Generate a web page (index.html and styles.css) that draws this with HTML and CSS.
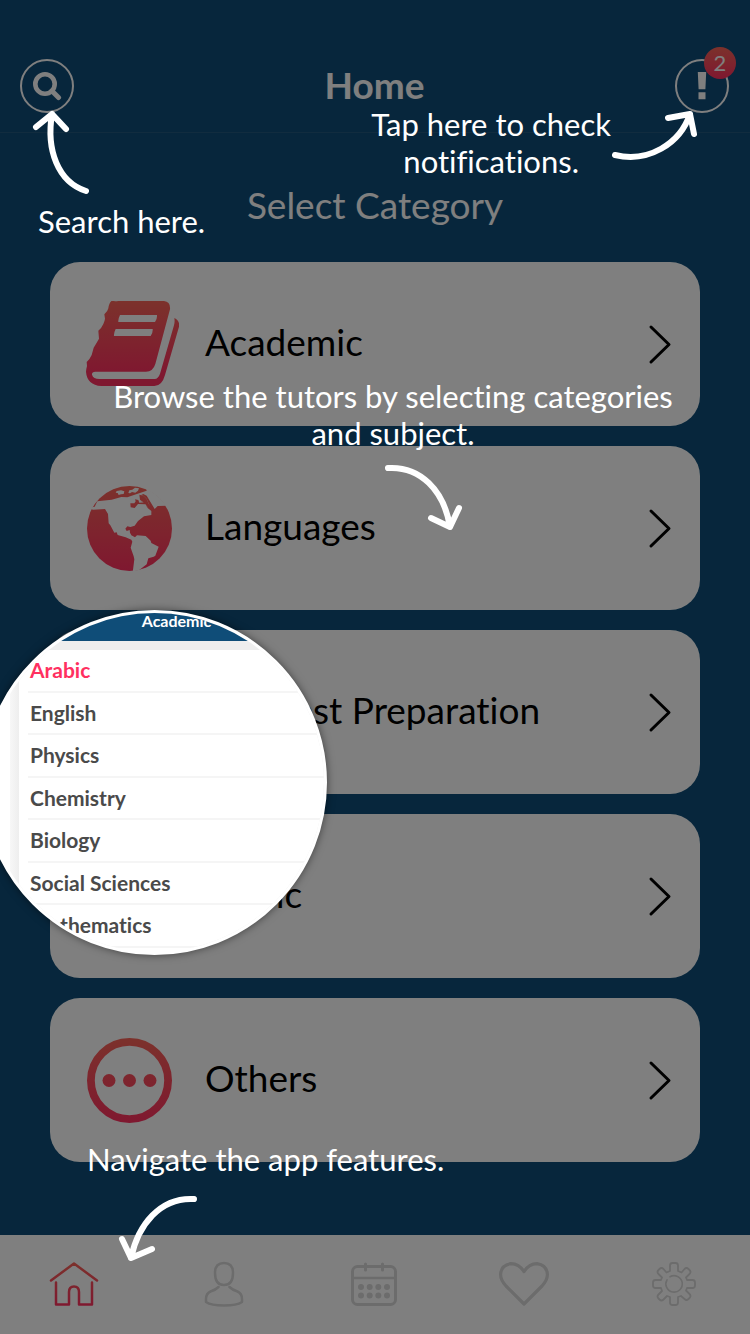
FILE: index.html
```html
<!DOCTYPE html>
<html lang="en">
<head>
<meta charset="utf-8">
<meta name="viewport" content="width=device-width, initial-scale=1">
<title>Home</title>
<link rel="stylesheet" href="styles.css">
</head>
<body>
<svg class="defs" width="0" height="0" aria-hidden="true">
  <defs>
    <linearGradient id="book-fill" gradientUnits="userSpaceOnUse" x1="0" y1="153" x2="0" y2="370"><stop offset="0" stop-color="#f86458"/><stop offset="1" stop-color="#ff3060"/></linearGradient>
    <linearGradient id="warm" x1="0" y1="0" x2="0" y2="1"><stop offset="0" stop-color="#f86458"/><stop offset="1" stop-color="#ff3060"/></linearGradient>
    <linearGradient id="globe-fill" gradientUnits="userSpaceOnUse" x1="0" y1="138" x2="0" y2="393"><stop offset="0" stop-color="#f86458"/><stop offset="1" stop-color="#ff3060"/></linearGradient>
    <linearGradient id="ring-fill" gradientUnits="userSpaceOnUse" x1="0" y1="0" x2="0" y2="85"><stop offset="0" stop-color="#f86458"/><stop offset="1" stop-color="#ff3060"/></linearGradient>
    <linearGradient id="home-fill" gradientUnits="userSpaceOnUse" x1="0" y1="0" x2="0" y2="46"><stop offset="0" stop-color="#f86458"/><stop offset="1" stop-color="#ff3060"/></linearGradient>
    <clipPath id="globe-clip"><circle cx="268" cy="265" r="129"/></clipPath>
  </defs>
</svg>

<div class="app">
  <header class="topbar">
    <button class="round" type="button" aria-label="Search">
      <svg width="30" height="30" viewBox="0 0 30 30"><circle cx="13" cy="13" r="9.7" fill="none" stroke="#fff" stroke-width="4.6"/><path d="M20 20l6.500 6.500" stroke="#fff" stroke-width="5" stroke-linecap="round"/></svg>
    </button>
    <h1 class="title">Home</h1>
    <button class="round" type="button" aria-label="Notifications">
      <svg width="10" height="28" viewBox="0 0 10 28"><path d="M.8 0h8.400l-.8 17.300h-6.800zM1.500 20.300h7v7h-7z" fill="#fff"/></svg>
      <span class="badge">2</span>
    </button>
  </header>

  <main class="main">
    <h2 class="heading">Select Category</h2>
    <nav class="cards" aria-label="Categories">
      <a class="card" href="#academic">
        <span class="pic pic-wide"><svg width="93" height="85" viewBox="138 153 279 255"><path fill="url(#book-fill)" fill-rule="evenodd" d="M222 153q6 2 12 0h138q20 2 18 25l-44 164q-7 23-28 23H166q-11 0-10 9 4 13 22 13h166q11-1 16-16l42-145q3-11 1-22 17 8 14 26l-42 145q-9 33-32 33H184q-43-3-46-43 1-10 3-17l-1-12q10-9 15-21l6-22q8-13 16-27l-2-24q10-8 15-20 4-9 5-16l-2-13q10-8 12-18 2-18 12-24zM240 195q-6 12-5 21h110q7-10 6-21zM227 237q-6 12-5 21h110q7-10 6-21z"/></svg></span>
        <span class="name">Academic</span>
        <svg class="chevron" width="22" height="38" viewBox="0 0 22 38"><path d="M2 2l18 17.500L2 37"/></svg>
      </a>
      <a class="card" href="#languages">
        <span class="pic"><svg width="85" height="85" viewBox="141 138 255 255"><circle cx="268.500" cy="265.500" r="127.500" fill="url(#warm)"/><g clip-path="url(#globe-clip)" fill="#fff"><path d="M157 202l7-2 8-16 43-5 29-8 18 1 22-8 36-12-1-8 24-10 60 60-25 3-25 1-9 9-24-40-10-5-11 5 4 15 14 12 6 10 11 9 0 12-22 4-18 14-10 14-13 4-9-2-6 7 4 7 9-3 1 8 4 8 11 6 6-6 26 2 15 14 2 7 22 11-10 27-5 3-16 5-5 18-23 18-2 10-15 6-2-9 5-40-2-9-9-26 5-18-3-6-17-7-24-7-3-8-7 1-12-22-5-6-2-28-9-15-36 2-6-2z"/></g><path d="M271 190l12 0 4-6-2-6 10 2 3 8 20-1-3 6-21-1-10 12-12-2zM298 164l12 3 10 10 8 18-4 8-10-10-14-14zM230 153l-3 5 6 1 3 6 7-2 8-1 2-8-10-3zM265 159l5 1 6-4 10 2 8-6 3-7-12-2-8 6-9 2z" fill="#fff"/><path d="M271 190l12 0 4-6-2-6 10 2 3 8 20-1-3 6-21-1-10 12-12-2zM298 164l12 3 10 10 12 28-8-2-10-13-14-11z" fill="url(#globe-fill)"/></svg></span>
        <span class="name">Languages</span>
        <svg class="chevron" width="22" height="38" viewBox="0 0 22 38"><path d="M2 2l18 17.500L2 37"/></svg>
      </a>
      <a class="card" href="#test-preparation">
        <span class="pic"></span>
        <span class="name">SAT Test Preparation</span>
        <svg class="chevron" width="22" height="38" viewBox="0 0 22 38"><path d="M2 2l18 17.500L2 37"/></svg>
      </a>
      <a class="card" href="#music">
        <span class="pic"></span>
        <span class="name">Music</span>
        <svg class="chevron" width="22" height="38" viewBox="0 0 22 38"><path d="M2 2l18 17.500L2 37"/></svg>
      </a>
      <a class="card" href="#others">
        <span class="pic"><svg width="85" height="85" viewBox="0 0 85 85" fill="url(#ring-fill)"><circle cx="42.500" cy="42.500" r="38.600" fill="none" stroke="url(#ring-fill)" stroke-width="7.800"/><circle cx="22" cy="42.500" r="6.500"/><circle cx="42.500" cy="42.500" r="6.500"/><circle cx="63" cy="42.500" r="6.500"/></svg></span>
        <span class="name">Others</span>
        <svg class="chevron" width="22" height="38" viewBox="0 0 22 38"><path d="M2 2l18 17.500L2 37"/></svg>
      </a>
    </nav>
  </main>

  <nav class="tabs" aria-label="App">
    <a class="tab" href="#home" aria-label="Home"><svg width="50" height="46" viewBox="0 0 50 46" stroke="url(#home-fill)"><path d="M2 19.500L25 2.500l23 17M7 21.500V43.500H20V31q0-5.500 5-5.500t5 5.500V43.500H43V21.500"/></svg></a>
    <a class="tab" href="#profile" aria-label="Profile"><svg width="40" height="46" viewBox="0 0 40 46"><path d="M20 2q9 0 9 10 0 12-9 12t-9-12Q11 2 20 2zM14.500 26q-3 3-8 4.500-4.500 2-4.500 7.500v3q5 3.500 18 3.500t18-3.500v-3q0-5.500-4.500-7.500-5-1.500-8-4.500"/></svg></a>
    <a class="tab" href="#calendar" aria-label="Calendar"><svg width="48" height="46" viewBox="0 0 48 46"><rect x="2.500" y="5.500" width="43" height="38" rx="5" stroke-width="3"/><path stroke-width="2.500" d="M3 17h42"/><path stroke-width="3" d="M15.500 3v6M32.500 3v6"/><g fill="#d8d8d8" stroke="none"><circle cx="11" cy="26" r="3"/><circle cx="19.700" cy="26" r="3"/><circle cx="28.300" cy="26" r="3"/><circle cx="37" cy="26" r="3"/><circle cx="11" cy="34.500" r="3"/><circle cx="19.700" cy="34.500" r="3"/><circle cx="28.300" cy="34.500" r="3"/><circle cx="37" cy="34.500" r="3"/></g></svg></a>
    <a class="tab" href="#favourites" aria-label="Favourites"><svg width="50" height="46" viewBox="0 0 50 46"><path stroke-width="3.200" d="M25 43L7 25Q1.600 19 1.600 13.500 2 4 12 2.600q8 0 13 8 5-8 13-8 10 1.400 10.400 10.900Q48.400 19 43 25z"/></svg></a>
    <a class="tab" href="#settings" aria-label="Settings"><svg width="44" height="46" viewBox="-22 -23 44 46"><path stroke-width="1.800" d="M-4-13V-18.500q0-2.500 2.500-2.500h3q2.500 0 2.500 2.500V-13L7.500-11.500 10.500-15q2-2 4 0l1 1q2 2 0 4L12-6.500 13-4H18.500q2.500 0 2.500 2.500v3q0 2.500-2.500 2.500H13L12 6.500 15.500 10q2 2 0 4l-1 1q-2 2-4 0L7 12 4 13V18.500q0 2.500-2.500 2.500h-3q-2.500 0-2.500-2.500V13L-7 12-10.500 15.500q-2 2-4 0l-1-1q-2-2 0-4L-12 7-13 4H-18.500q-2.500 0-2.500-2.500v-3q0-2.500 2.500-2.500H-13L-12-6.500-15.500-10q-2-2 0-4l1-1q2-2 4 0L-7.500-11.500z"/><path stroke-width="1.600" d="M-4-7.200A8.200 8.200 0 1 1-7-4.200"/></svg></a>
  </nav>

  <div class="coach">
    <p class="hint hint-search">Search here.</p>
    <svg class="arrow arrow-search" width="64" height="90" viewBox="30 108 64 90"><path d="M36 127L52 114 66 129M52 114C46 150 58 182 86 191"/></svg>

    <p class="hint hint-bell">Tap here to check<br>notifications.</p>
    <svg class="arrow arrow-bell" width="90" height="60" viewBox="608 108 90 60"><path d="M668 118L690 114 694 134M690 114C680 144 648 163 615 155"/></svg>

    <p class="hint hint-browse">Browse the tutors by selecting categories<br>and subject.</p>
    <svg class="arrow arrow-browse" width="80" height="70" viewBox="384 462 80 70"><path d="M431 518L450 527 459 508M450 527C444 490 420 466 388 468"/></svg>

    <div class="lens">
      <div class="lens-bar">Academic</div>
      <div class="lens-body">
        <ul class="subjects">
          <li class="subject on">Arabic</li>
          <li class="subject">English</li>
          <li class="subject">Physics</li>
          <li class="subject">Chemistry</li>
          <li class="subject">Biology</li>
          <li class="subject">Social Sciences</li>
          <li class="subject">Mathematics</li>
        </ul>
      </div>
    </div>

    <p class="hint hint-nav">Navigate the app features.</p>
    <svg class="arrow arrow-nav" width="84" height="70" viewBox="116 1193 84 70"><path d="M122 1239L131 1258 152 1249M131 1258C138 1225 160 1197 194 1199"/></svg>
  </div>
</div>
</body>
</html>
```

FILE: styles.css
```css
* {
  box-sizing: border-box;
}

body {
  margin: 0;
  background: #0f4d78;
  color: #000;
  font-family: Lato, "Open Sans", sans-serif;
  font-variant-ligatures: none;
}

h1, h2, p, ul {
  margin: 0;
  padding: 0;
}

.defs {
  position: absolute;
}

.app {
  position: relative;
  display: flex;
  flex-direction: column;
  min-height: 100vh;
  overflow: hidden;
}

.topbar {
  display: flex;
  align-items: center;
  justify-content: space-between;
  padding: 59px 21px 19px 20px;
  border-bottom: 1px solid #23597f;
}

.round {
  position: relative;
  display: grid;
  place-items: center;
  width: 54px;
  height: 54px;
  padding: 0;
  border: 2px solid #fff;
  border-radius: 50%;
  background: none;
}

.badge {
  position: absolute;
  top: -14px;
  right: -9px;
  width: 32px;
  height: 32px;
  border-radius: 50%;
  background: linear-gradient(#f86458, #ff3060);
  color: #fff;
  font: 22px/32px Lato, sans-serif;
  text-align: center;
}

.title {
  padding-bottom: 2px;
  color: #fff;
  font-size: 37px;
  font-weight: 700;
  line-height: 48px;
}

.main {
  flex: 1;
  padding: 48px 50px 73px;
}

.heading {
  margin-bottom: 33px;
  color: #fff;
  font-size: 37px;
  font-weight: 400;
  line-height: 48px;
  text-align: center;
}

.cards {
  display: flex;
  flex-direction: column;
  gap: 20px;
}

.card {
  display: flex;
  align-items: center;
  gap: 25px;
  height: 164px;
  padding: 0 29px 0 36px;
  border-radius: 30px;
  background: #fff;
  color: #000;
  font-size: 37px;
  line-height: 48px;
  text-decoration: none;
}

.pic {
  display: grid;
  width: 94px;
  padding-left: 1px;
}

.pic-wide {
  padding: 0 0 2px;
}

.name {
  flex: 1;
  padding-bottom: 4px;
}

.chevron {
  overflow: visible;
  fill: none;
  stroke: #000;
  stroke-width: 3;
  stroke-linecap: round;
  stroke-linejoin: round;
}

.tabs {
  display: grid;
  grid-template-columns: repeat(5, 1fr);
  height: 99px;
  background: #fff;
}

.tab {
  display: grid;
  place-items: center;
  padding: 0 2px 2px 0;
}

.tab svg {
  fill: none;
  stroke-width: 2.5;
  stroke-linecap: round;
  stroke-linejoin: round;
}

.tab svg:not([stroke]) {
  stroke: #d8d8d8;
}

.coach {
  position: absolute;
  inset: 0;
  background: rgba(0, 0, 0, .5);
  color: #fff;
}

.hint {
  position: absolute;
  font-size: 31px;
  line-height: 37px;
  text-align: center;
  white-space: nowrap;
}

.hint-search {
  top: 203px;
  left: 38px;
}

.hint-bell {
  top: 106px;
  right: 139px;
}

.hint-browse {
  top: 378px;
  left: 36px;
  right: 0;
}

.hint-nav {
  bottom: 156px;
  left: 87px;
}

.arrow {
  position: absolute;
  fill: none;
  stroke: #fff;
  stroke-width: 6;
  stroke-linecap: round;
  stroke-linejoin: round;
}

.arrow-search {
  top: 108px;
  left: 30px;
}

.arrow-bell {
  top: 108px;
  right: 52px;
}

.arrow-browse {
  top: 462px;
  left: calc(50% + 9px);
}

.arrow-nav {
  bottom: 71px;
  left: 116px;
}

.lens {
  position: absolute;
  top: 610px;
  left: -18px;
  width: 345px;
  height: 345px;
  overflow: hidden;
  border: 3px solid #fff;
  border-radius: 50%;
  background: #fff;
  box-shadow: 0 0 8px rgba(0, 0, 0, .5);
}

.lens-bar {
  height: 28px;
  padding-left: 44px;
  background: #0f4d78;
  font-size: 16px;
  font-weight: 700;
  line-height: 16px;
  text-align: center;
}

.lens-body {
  padding: 9px 0 0 9px;
  border-left: 25px solid #fff;
  background: linear-gradient(90deg, #f7f7f7, #eee 9px);
}

.subjects {
  display: flex;
  flex-direction: column;
  height: 298px;
  padding-left: 9px;
  background: #fff;
  list-style: none;
}

.subject {
  flex: 1;
  padding-left: 2px;
  border-bottom: 2px solid #f5f5f5;
  color: #4a4a4a;
  font-size: 21px;
  font-weight: 700;
  line-height: 40px;
}

.subject.on {
  color: #ff3060;
}
```
